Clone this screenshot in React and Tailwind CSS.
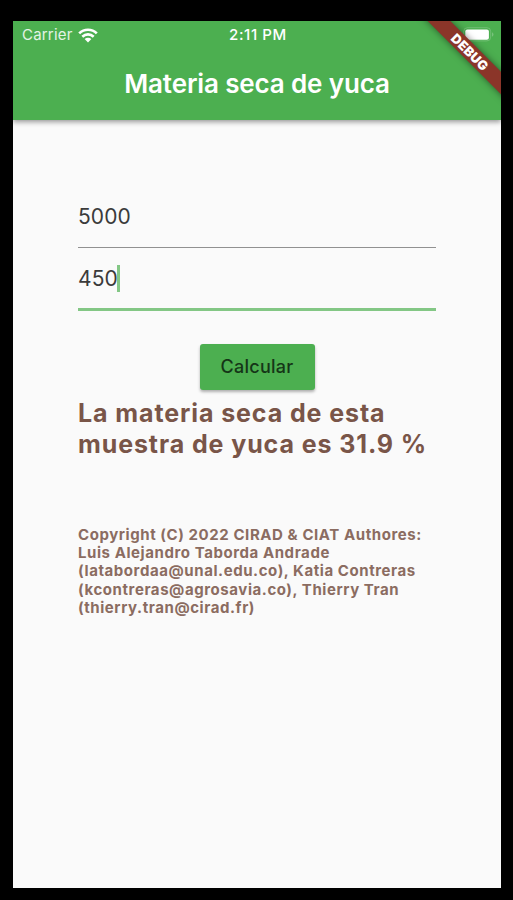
function WifiIcon() {
  return (
    <svg className="ml-[5px] h-[15px] w-5" viewBox="0 0 20 15" fill="none">
      <path d="M1.2 5.4C6.2 0.5 13.8 0.5 18.8 5.4" stroke="white" strokeWidth="2.7" />
      <path d="M4.3 8.7C7.6 5.6 12.4 5.6 15.7 8.7" stroke="white" strokeWidth="2.6" />
      <path d="M6.6 11.1C8.6 9.3 11.4 9.3 13.4 11.1L10 14.5Z" fill="white" />
    </svg>
  );
}

function BatteryIcon() {
  return (
    <svg className="h-[15px] w-[31px]" viewBox="0 0 31 15">
      <rect x="0.7" y="0.7" width="27" height="13.2" rx="3.8" fill="none" stroke="white" strokeOpacity="0.2" />
      <rect x="2.3" y="2.5" width="23.6" height="10.3" rx="2" fill="white" />
      <path d="M29 5.2c2 1 2 3.6 0 4.6z" fill="white" fillOpacity="0.25" />
    </svg>
  );
}

function AppBar() {
  return (
    <header className="relative z-10 h-[99px] bg-[#4caf50] text-white shadow-[0_2px_5px_rgba(0,0,0,0.4)]">
      <div className="grid h-[27px] grid-cols-3 items-center pl-[9px] pr-[7px]">
        <div className="flex items-center pt-px text-[15px] tracking-[0.2px] text-white/85">
          <span>Carrier</span>
          <WifiIcon />
        </div>
        <div className="pt-px text-center text-[15px] font-medium tracking-[0.6px]">2:11 PM</div>
        <div className="flex justify-end">
          <BatteryIcon />
        </div>
      </div>
      <h1 className="flex h-[72px] items-center justify-center pb-px text-[26px] font-semibold tracking-[-0.14px]">
        Materia seca de yuca
      </h1>
    </header>
  );
}

function DebugBanner() {
  return (
    <div className="absolute right-0 top-0 z-20 h-[90px] w-[90px] overflow-hidden">
      <div className="absolute left-[-1px] top-[23px] flex h-4 w-[120px] rotate-45 items-center justify-center bg-[#8b3529] text-[13px] font-black leading-none tracking-[0.2px] text-white shadow-[0_0_7px_rgba(0,0,0,0.5)]">
        DEBUG
      </div>
    </div>
  );
}

export default function App() {
  return (
    <div className="h-[900px] w-[513px] overflow-hidden bg-black pl-[13px] pt-[21px] font-['Inter','Liberation_Sans',sans-serif]">
      <div className="relative h-[867px] w-[488px] overflow-hidden bg-[#fafafa]">
        <AppBar />
        <DebugBanner />
        <main className="flex flex-col px-[65px] pt-[65px]">
          <div className="flex h-[63px] items-center whitespace-nowrap border-b border-[#919191] pt-px text-[21px] leading-none text-[#3b3b3b]">
            <span className="tracking-[0.1px]">5000</span>
          </div>
          <div className="flex h-[63px] items-center whitespace-nowrap border-b-[3px] border-[#83c785] pt-px text-[21px] leading-none text-[#3b3b3b]">
            <span className="tracking-[0.1px]">450</span>
            <span className="-ml-px h-[27px] w-[3px] bg-[#83c785]" />
          </div>
          <button className="mt-[33px] h-[46px] w-[115px] self-center rounded-[3px] bg-[#4caf50] pb-px text-[18px] font-medium tracking-[0.25px] text-[#153517] shadow-[0_2px_3px_rgba(0,0,0,0.3)]">
            Calcular
          </button>
          <p className="mt-[8px] whitespace-nowrap text-[25px] font-bold leading-[31px] tracking-[0.9px] text-[#795548]">
            La materia seca de esta
            <br />
            muestra de yuca es 31.9 %
          </p>
          <p className="mt-[66px] whitespace-nowrap text-[15px] font-bold leading-[18.2px] tracking-[0.57px] text-[#8b6c61]">
            Copyright (C) 2022 CIRAD &amp; CIAT Authores:
            <br />
            Luis Alejandro Taborda Andrade
            <br />
            (latabordaa@unal.edu.co), Katia Contreras
            <br />
            (kcontreras@agrosavia.co), Thierry Tran
            <br />
            (thierry.tran@cirad.fr)
          </p>
        </main>
      </div>
    </div>
  );
}
